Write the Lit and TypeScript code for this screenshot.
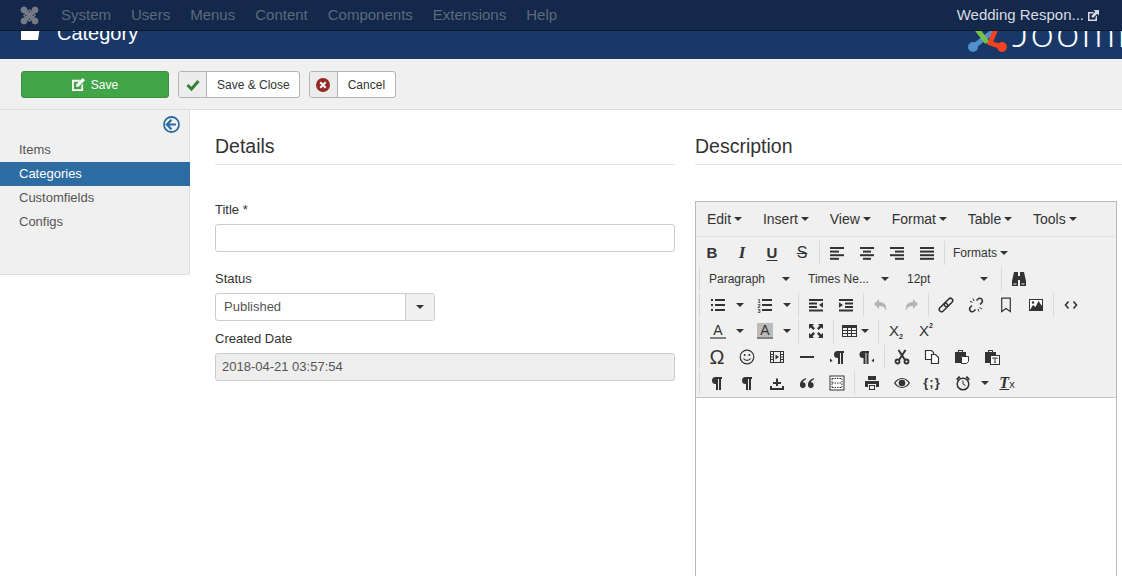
import { LitElement, css, html, svg } from "lit";
import { customElement } from "lit/decorators.js";

const ink = "#333";

// toolbar glyphs, all on a 16x16 box
const lines = (rows: [number, number][]) =>
	rows.map(([x, w], i) => svg`<rect x=${x} y=${2 + i * 3.6} width=${w} height="2" fill=${ink}></rect>`);

const icons: Record<string, unknown> = {
	alignleft: lines([[1, 14], [1, 9], [1, 14], [1, 9]]),
	aligncenter: lines([[1, 14], [4, 8], [1, 14], [4, 8]]),
	alignright: lines([[1, 14], [6, 9], [1, 14], [6, 9]]),
	justify: lines([[1, 14], [1, 14], [1, 14], [1, 14]]),
	binoculars: svg`<path fill=${ink} d="M3 1h4v4h2V1h4l2 9v5H9V9H7v6H1v-5z"></path><path fill="#f0f0f0" d="M2.5 12.500h3v1h-3zM10.500 12.500h3v1h-3z"></path>`,
	bullist: svg`<path fill=${ink} d="M1 2h2v2H1zM1 7h2v2H1zM1 12h2v2H1zM5 2h10v2H5zM5 7h10v2H5zM5 12h10v2H5z"></path>`,
	numlist: svg`<path fill=${ink} d="M5 2h10v2H5zM5 7h10v2H5zM5 12h10v2H5z"></path><text x="0.500" y="5.500" class="tiny">1</text><text x="0.500" y="10.500" class="tiny">2</text><text x="0.500" y="15.500" class="tiny">3</text>`,
	outdent: svg`<path fill=${ink} d="M1 2h14v2H1zM1 5.500h8v2H1zM1 9h8v2H1zM1 12.500h14v2H1zM15 5.200v5.600L11 8z"></path>`,
	indent: svg`<path fill=${ink} d="M1 2h14v2H1zM7 5.500h8v2H7zM7 9h8v2H7zM1 12.500h14v2H1zM1 5.200v5.600L5 8z"></path>`,
	undo: svg`<path fill="#b4b4b4" d="M6 2 1 7l5 5V9c4 0 6 1 7 5 1-5-1-9-7-9z"></path>`,
	redo: svg`<path fill="#b4b4b4" d="M10 2l5 5-5 5V9c-4 0-6 1-7 5-1-5 1-9 7-9z"></path>`,
	link: svg`<g fill="none" stroke=${ink} stroke-width="1.600"><rect x="8.200" y="0.500" width="4.600" height="10" rx="2.300" transform="rotate(45 10.500 5.500)"></rect><rect x="3.200" y="5.500" width="4.600" height="10" rx="2.300" transform="rotate(45 5.500 10.500)"></rect></g>`,
	unlink: svg`<g fill="none" stroke=${ink} stroke-width="1.600"><path d="M8.500 3.500 10 2c1.500-1.200 3-.7 3.700.3.800 1 1 2.300 0 3.500L12 7.500M7.500 12.500 6 14c-1.500 1.200-3 .7-3.700-.3-.8-1-1-2.300 0-3.500L4 8.500"></path><path stroke-width="1" d="M2 4 4.500 5.500M5 1.500 6 4M11.500 10.500 14 12M10 12l1 2.500"></path></g>`,
	bookmark: svg`<path fill="none" stroke=${ink} stroke-width="1.200" d="M3.700 1.200h8.600v13.400L8 11.500l-4.300 3.100z"></path>`,
	image: svg`<rect x="1" y="2" width="14" height="12" fill=${ink}></rect><rect x="2" y="3" width="12" height="10" fill="#fff"></rect><path fill=${ink} d="M2 13l3-5 2.500 2 3-6L14 9v4z"></path><circle cx="5" cy="5.500" r="1.200" fill=${ink}></circle>`,
	code: svg`<path fill="none" stroke=${ink} stroke-width="1.600" d="M5.500 4.500 2.500 8l3 3.500M10.500 4.500l3 3.500-3 3.500"></path>`,
	fullscreen: svg`<path fill=${ink} d="M1 1h5L4.500 2.800 7 5.300 5.300 7 2.800 4.500 1 6zM15 1v5l-1.800-1.500L10.700 7 9 5.300l2.500-2.500L10 1zM1 15v-5l1.800 1.500L5.300 9 7 10.700l-2.500 2.500L6 15zM15 15h-5l1.500-1.800L9 10.700 10.700 9l2.500 2.500L15 10z"></path>`,
	table: svg`<path fill=${ink} d="M0 2h15v12H0zM1 5v2h4V5zm5 0v2h3V5zm4 0v2h4V5zM1 8v2h4V8zm5 0v2h3V8zm4 0v2h4V8zM1 11v2h4v-2zm5 0v2h3v-2zm4 0v2h4v-2z" fill-rule="evenodd"></path>`,
	smile: svg`<circle cx="8" cy="8" r="6.800" fill="none" stroke=${ink} stroke-width="1.200"></circle><circle cx="5.700" cy="6" r="1" fill=${ink}></circle><circle cx="10.300" cy="6" r="1" fill=${ink}></circle><path fill="none" stroke=${ink} stroke-width="1.200" d="M4.500 9.500c1.500 2.500 5.500 2.500 7 0"></path>`,
	media: svg`<path fill-rule="evenodd" fill=${ink} d="M1 2h14v12H1zM2 3v2h2V3zm0 3v1.500h2V6zm0 2.500V10h2V8.500zM2 11v2h2v-2zM12 3v2h2V3zm0 3v1.500h2V6zm0 2.500V10h2V8.500zM12 11v2h2v-2zM5 3v10h6V3z"></path><path fill=${ink} d="M6.500 5.500 10 8l-3.500 2.500z"></path>`,
	hr: svg`<rect x="1" y="7" width="14" height="2" fill=${ink}></rect>`,
	ltr: svg`<path fill=${ink} d="M15 2H8.500a3.500 3.500 0 0 0 0 7H9v6h2V4h1v11h2V4h1zM1 9.500v4L3.500 11.500z"></path>`,
	rtl: svg`<path fill=${ink} d="M10 2H4a3.500 3.500 0 0 0 0 7h.5v6h2V4h1v11h2V4h.5zM15 9.500v4l-2.500-2z"></path>`,
	pilcrow: svg`<path fill=${ink} d="M13 2H6.500a3.500 3.500 0 0 0 0 7H7v6h2V4h1v11h2V4h1z"></path>`,
	cut: svg`<g fill="none" stroke=${ink} stroke-width="1.800"><circle cx="3.500" cy="12.500" r="2"></circle><circle cx="12.500" cy="12.500" r="2"></circle><path stroke-width="2" d="M4.500 1 11 11M11.500 1 5 11"></path></g>`,
	copy: svg`<g fill="#fff" stroke=${ink} stroke-width="1.200"><path d="M1.500 1.500h6l2 2v7h-8z"></path><path d="M7.500 5.500h4l3 3v6h-7z"></path></g>`,
	paste: svg`<path fill=${ink} d="M1 3h3V1h5v2h3v4H7v7H1z"></path><path fill="#f0f0f0" d="M5 2h3v1H5z"></path><path fill="#fff" stroke=${ink} d="M7.500 7.500h7v5l-2 2h-5z"></path>`,
	pastetext: svg`<path fill=${ink} d="M1 3h3V1h5v2h3v4H7v7H1z"></path><path fill="#f0f0f0" d="M5 2h3v1H5z"></path><rect x="6.500" y="6.500" width="9" height="9" fill="#fff" stroke=${ink}></rect><path fill=${ink} d="M8.500 8.500h5v1.600h-.8v-.7h-1.200v4h.7v.7h-2.400v-.7h.7v-4H9.300v.7h-.8z"></path>`,
	nonbreaking: svg`<path fill=${ink} d="M1 11h2v2h10v-2h2v4H1zM7 3.500h2V7h3v2H9v2H7V9H4V7h3z"></path>`,
	quote: svg`<path fill=${ink} d="M7 3C4 4 1 6 1 10a2.800 2.800 0 1 0 3-2.700C4.300 6 5.500 5 7 4.300zM15 3c-3 1-6 3-6 7a2.800 2.800 0 1 0 3-2.700c.3-1.300 1.500-2.300 3-3z"></path>`,
	template: svg`<rect x="1" y="1" width="14" height="14" fill="#fff" stroke=${ink}></rect><g fill="none" stroke=${ink} stroke-dasharray="1.500 1"><path d="M3 3.500h10M3 8h10M3 12.500h10M3 3.500v9M13 3.500v9"></path></g>`,
	print: svg`<path fill=${ink} d="M4 1h8v4H4zM1 6h14v6h-3V9H4v3H1zM5 10h6v5H5z"></path><path fill="#f0f0f0" d="M6 11h4v3H6z"></path>`,
	eye: svg`<path fill-rule="evenodd" fill=${ink} d="M8 3c3.500 0 6.500 2.300 8 5-1.500 2.700-4.500 5-8 5s-6.500-2.300-8-5c1.500-2.700 4.500-5 8-5zM1.500 8c1.300 2 3.500 4 6.500 4s5.200-2 6.500-4c-1.300-2-3.500-4-6.500-4S2.800 6 1.500 8z"></path><circle cx="8" cy="8" r="3.300" fill=${ink}></circle>`,
	clock: svg`<circle cx="8" cy="9" r="5.800" fill="#f0f0f0" stroke=${ink} stroke-width="1.500"></circle><path fill="none" stroke=${ink} d="M8 5.500V9l2.500 1.500"></path><path fill=${ink} d="M1 4l3-3 1.500 1.200-3.300 3zM15 4l-3-3-1.500 1.200 3.300 3z"></path>`,
};

type Tool =
	| { kind: "icon"; name: string }
	| { kind: "text"; cls: string; label: string }
	| { kind: "split"; name?: string; cls?: string; label?: string; narrow?: boolean }
	| { kind: "table" }
	| { kind: "listbox"; label: string }
	| { kind: "formats" };

const ic = (name: string): Tool => ({ kind: "icon", name });
const tx = (cls: string, label: string): Tool => ({ kind: "text", cls, label });

const rows: Tool[][][] = [
	[
		[tx("b", "B"), tx("i", "I"), tx("u", "U"), tx("s", "S")],
		[ic("alignleft"), ic("aligncenter"), ic("alignright"), ic("justify")],
		[{ kind: "formats" }],
	],
	[
		[
			{ kind: "listbox", label: "Paragraph" },
			{ kind: "listbox", label: "Times Ne..." },
			{ kind: "listbox", label: "12pt" },
		],
		[ic("binoculars")],
	],
	[
		[{ kind: "split", name: "bullist" }, { kind: "split", name: "numlist" }],
		[ic("outdent"), ic("indent")],
		[ic("undo"), ic("redo")],
		[ic("link"), ic("unlink"), ic("bookmark"), ic("image")],
		[ic("code")],
	],
	[
		[
			{ kind: "split", cls: "fore", label: "A" },
			{ kind: "split", cls: "back", label: "A" },
		],
		[ic("fullscreen")],
		[{ kind: "table" }],
		[tx("sub", "X"), tx("sup", "X")],
	],
	[
		[tx("omega", "Ω"), ic("smile"), ic("media"), ic("hr"), ic("ltr"), ic("rtl")],
		[ic("cut"), ic("copy"), ic("paste"), ic("pastetext")],
	],
	[
		[ic("pilcrow"), ic("pilcrow"), ic("nonbreaking"), ic("quote"), ic("template")],
		[
			ic("print"),
			ic("eye"),
			tx("braces", "{;}"),
			{ kind: "split", name: "clock", narrow: true },
			tx("clear", "T"),
		],
	],
];

const glyph = (name: string) => html`<svg class="glyph" viewBox="0 0 16 16">${icons[name]}</svg>`;

@customElement("app-root")
export class AppRoot extends LitElement {
	static override styles = css`
		:host {
			display: block;
			position: relative;
			width: 1122px;
			height: 576px;
			overflow: hidden;
			background: #fff;
			color: #333;
			font: 13px/18px "Liberation Sans", Arial, sans-serif;
		}

		.navbar {
			position: absolute;
			top: 0;
			left: 0;
			right: 0;
			height: 30px;
			display: flex;
			align-items: center;
			padding-left: 20px;
			background: #13284a;
			border-bottom: 1px solid #0c1a30;
			color: #5e6a7b;
			font-size: 15px;
		}
		.navbar .mark {
			width: 19px;
			height: 19px;
			margin-right: 22px;
		}
		.navbar .menu {
			display: flex;
			gap: 20px;
		}
		.navbar .site {
			margin-left: auto;
			margin-right: 23px;
			display: flex;
			align-items: center;
			gap: 4px;
			color: #d8dce2;
			font-size: 15px;
		}

		.header {
			height: 59px;
			box-sizing: border-box;
			padding: 20px 0 0 21px;
			display: flex;
			background: #1a3867;
			color: #fff;
			overflow: hidden;
		}
		.header .folder {
			width: 20px;
			height: 20px;
			margin-right: 16px;
		}
		.header h1 {
			margin: 0;
			font-size: 20px;
			font-weight: 400;
			line-height: 26px;
		}
		.logo {
			margin-left: auto;
			margin-top: -6px;
			display: flex;
			flex: none;
			width: 156px;
			height: 42px;
		}
		.logo svg {
			width: 42px;
			height: 42px;
			flex: none;
		}
		.logo span {
			margin: -4px 0 0 4px;
			font: 300 42px/42px Lato, "Liberation Sans", sans-serif;
			letter-spacing: 2px;
			white-space: nowrap;
		}

		.actions {
			height: 51px;
			box-sizing: border-box;
			padding: 12px 0 0 21px;
			display: flex;
			gap: 9px;
			background: #f0f0f0;
			border-bottom: 1px solid #ddd;
			font-size: 12px;
		}
		.save {
			width: 148px;
			height: 27px;
			box-sizing: border-box;
			display: flex;
			align-items: center;
			justify-content: center;
			gap: 6px;
			background: #41a548;
			border: 1px solid #3a8f40;
			border-radius: 3px;
			color: #fff;
		}
		.save svg {
			width: 13px;
			height: 13px;
		}
		.act {
			height: 27px;
			box-sizing: border-box;
			display: flex;
			align-items: center;
			background: #fff;
			border: 1px solid #b3b3b3;
			border-radius: 3px;
			color: #333;
			padding-right: 10px;
		}
		.act .tag {
			width: 27px;
			height: 25px;
			margin-right: 10px;
			display: flex;
			align-items: center;
			justify-content: center;
			background: #ececec;
			border-right: 1px solid #b3b3b3;
			border-radius: 3px 0 0 3px;
		}
		.act.keep {
			padding-right: 9px;
		}
		.act svg {
			width: 14px;
			height: 14px;
		}

		.page {
			display: flex;
			align-items: flex-start;
		}
		.side {
			width: 190px;
			height: 165px;
			flex: none;
			box-sizing: border-box;
			display: flex;
			flex-direction: column;
			background: #f0f0f0;
			border-right: 1px solid #ddd;
			border-bottom: 1px solid #ddd;
			border-bottom-right-radius: 3px;
		}
		.side .back {
			align-self: flex-end;
			width: 17px;
			height: 17px;
			margin: 6px 9px 5px 0;
		}
		.side a {
			height: 24px;
			padding-left: 19px;
			line-height: 24px;
			color: #555;
		}
		.side a.active {
			margin-right: -1px;
			background: #2d6ca2;
			color: #fff;
		}

		.details {
			width: 460px;
			flex: none;
			margin: 0 20px 0 25px;
		}
		.desc {
			flex: 1;
			min-width: 0;
		}
		h2 {
			height: 55px;
			box-sizing: border-box;
			margin: 0 0 36px;
			padding-top: 23px;
			border-bottom: 1px solid #e5e5e5;
			font-size: 19.500px;
			font-weight: 400;
			line-height: 26px;
			color: #333;
		}
		.desc h2 {
			margin-bottom: 0;
		}
		label {
			display: block;
			margin-bottom: 5px;
		}
		.field {
			height: 28px;
			box-sizing: border-box;
			margin-bottom: 18px;
			background: #fff;
			border: 1px solid #ccc;
			border-radius: 3px;
		}
		.pick {
			width: 220px;
			margin-bottom: 9px;
			display: flex;
			line-height: 26px;
			padding-left: 8px;
			color: #555;
		}
		.pick b {
			margin-left: auto;
			width: 28px;
			display: flex;
			align-items: center;
			justify-content: center;
			background: #f0f0f0;
			border-left: 1px solid #ccc;
			border-radius: 0 3px 3px 0;
		}
		.locked {
			padding-left: 6px;
			line-height: 26px;
			background: #eee;
			color: #555;
		}

		.editor {
			width: 422px;
			height: 500px;
			margin-top: 36px;
			box-sizing: border-box;
			border: 1px solid #b9b9b9;
			background: #fff;
		}
		.menubar {
			height: 35px;
			box-sizing: border-box;
			display: flex;
			align-items: center;
			gap: 20.800px;
			padding-left: 11px;
			background: #f0f0f0;
			border-bottom: 1px solid #e2e2e2;
			font-size: 14px;
		}
		.menubar span {
			display: flex;
			align-items: center;
			gap: 3px;
		}
		.caret {
			width: 0;
			height: 0;
			flex: none;
			border: 4px solid transparent;
			border-top-color: #333;
			border-bottom: 0;
		}
		.toolbar {
			height: 161px;
			box-sizing: border-box;
			padding: 3px 0 0 3px;
			background: #f0f0f0;
			border-bottom: 1px solid #c5c5c5;
		}
		.row {
			height: 26px;
			display: flex;
			align-items: center;
		}
		.group {
			height: 24px;
			display: flex;
			align-items: center;
			padding-left: 2px;
			margin-right: 2px;
			border-left: 1px solid #d9d9d9;
		}
		.row.first .group:first-child {
			margin-left: -2px;
			padding-left: 0;
			border-left: 0;
		}
		.btn {
			width: 30px;
			height: 24px;
			display: flex;
			align-items: center;
			justify-content: center;
			flex: none;
		}
		.glyph {
			width: 16px;
			height: 16px;
			flex: none;
		}
		.tiny {
			font: 700 5.500px "Liberation Sans", sans-serif;
			fill: #333;
		}
		.split {
			width: 47px;
			height: 24px;
			display: flex;
			align-items: center;
			flex: none;
			padding-left: 8px;
			box-sizing: border-box;
		}
		.split.narrow {
			width: 45px;
		}
		.split .caret {
			margin-left: 10px;
		}
		.tablebtn {
			width: 40px;
			height: 24px;
			display: flex;
			align-items: center;
			gap: 3px;
			padding-left: 6px;
			box-sizing: border-box;
		}
		.listbox {
			width: 99px;
			height: 24px;
			box-sizing: border-box;
			display: flex;
			align-items: center;
			padding-left: 7px;
			font-size: 12px;
			flex: none;
		}
		.listbox .caret {
			margin-left: auto;
			margin-right: 11px;
		}
		.formats {
			display: flex;
			align-items: center;
			gap: 3px;
			padding-left: 6px;
			font-size: 12px;
		}
		.b,
		.i,
		.u,
		.s {
			font-size: 15px;
			line-height: 16px;
		}
		.b {
			font-weight: 700;
		}
		.i {
			font-family: "Liberation Serif", serif;
			font-size: 17px;
			font-style: italic;
			font-weight: 700;
		}
		.u {
			font-weight: 700;
			text-decoration: underline;
			text-underline-offset: 2px;
		}
		.s {
			font-size: 16px;
			text-decoration: line-through;
		}
		.omega {
			font-size: 20px;
			font-family: "Liberation Sans", sans-serif;
		}
		.sub,
		.sup {
			font-size: 15px;
		}
		.sub::after,
		.sup::after {
			content: "2";
			font-size: 7px;
			font-weight: 700;
			line-height: 7px;
		}
		.sub::after {
			vertical-align: -3px;
		}
		.sup::after {
			vertical-align: 8px;
		}
		.braces {
			font-size: 13px;
			font-weight: 700;
			letter-spacing: 1px;
		}
		.clear {
			font-size: 16px;
			font-family: "Liberation Serif", serif;
			font-weight: 700;
			font-style: italic;
			text-decoration: underline;
			line-height: 16px;
		}
		.clear::after {
			content: "x";
			font-family: "Liberation Sans", sans-serif;
			font-size: 11px;
			font-weight: 400;
			font-style: normal;
			display: inline-block;
		}
		.letter {
			width: 16px;
			height: 16px;
			display: flex;
			justify-content: center;
			box-sizing: border-box;
			border-bottom: 2px solid #808080;
			font-size: 14px;
			line-height: 15px;
			flex: none;
		}
		.letter.back {
			background: #bbb;
		}
	`;

	private tool(t: Tool) {
		switch (t.kind) {
			case "icon":
				return html`<div class="btn">${glyph(t.name)}</div>`;
			case "text":
				return html`<div class="btn"><span class=${t.cls}>${t.label}</span></div>`;
			case "split":
				return html`<div class="split ${t.narrow ? "narrow" : ""}">
					${t.name ? glyph(t.name) : html`<span class="letter ${t.cls}">${t.label}</span>`}
					<i class="caret"></i>
				</div>`;
			case "table":
				return html`<div class="tablebtn">${glyph("table")}<i class="caret"></i></div>`;
			case "listbox":
				return html`<div class="listbox">${t.label}<i class="caret"></i></div>`;
			case "formats":
				return html`<div class="formats">Formats<i class="caret"></i></div>`;
		}
	}

	override render() {
		return html`
			<div class="header">
				<svg class="folder" viewBox="0 0 20 20">
					<path fill="#fff" d="M0 0h20l-3 20H0z"></path>
				</svg>
				<h1>Category</h1>
				<div class="logo">
					<svg viewBox="0 0 42 42">
						<g fill="none" stroke-width="5" stroke-linecap="round" stroke-linejoin="round">
							<path stroke="#5091cd" d="M7 33 25 19"></path>
							<path stroke="#f44321" d="M36 33 24 29 29 17"></path>
							<path stroke="#7ac143" d="M7 10 20 27"></path>
						</g>
						<circle cx="7" cy="33" r="5" fill="#5091cd"></circle>
						<circle cx="36" cy="33" r="5" fill="#f44321"></circle>
					</svg>
					<span>Joomla!</span>
				</div>
			</div>

			<div class="navbar">
				<svg class="mark" viewBox="0 0 19 19">
					<g fill="#737a85" stroke="#737a85">
						<path fill="none" stroke-width="4" d="M4 4 15 15M15 4 4 15"></path>
						<circle cx="4" cy="4" r="3"></circle>
						<circle cx="15" cy="4" r="3"></circle>
						<circle cx="4" cy="15" r="3"></circle>
						<circle cx="15" cy="15" r="3"></circle>
						<path fill="none" stroke-width="1.500" d="M4 9.500 9.500 4 15 9.500 9.500 15z"></path>
					</g>
				</svg>
				<div class="menu">
					<span>System</span><span>Users</span><span>Menus</span><span>Content</span>
					<span>Components</span><span>Extensions</span><span>Help</span>
				</div>
				<div class="site">
					Wedding Respon...
					<svg width="11" height="11" viewBox="0 0 11 11">
						<path fill="#d8dce2" d="M0 2h6L5 3.500H1.500v6h6V7L9 5.500V11H0zM5.500 0H11v5.500L9.200 3.800 5 8 3.200 6.200 7.300 1.800z"></path>
					</svg>
				</div>
			</div>

			<div class="actions">
				<div class="save">
					<svg viewBox="0 0 14 14">
						<path fill="#fff" d="M0 2h9L7 4H2v8h8V8l2-2v8H0zM11.500 0 14 2.500 7 9.500H4.500V7z"></path>
					</svg>
					Save
				</div>
				<div class="act keep">
					<span class="tag">
						<svg viewBox="0 0 14 14">
							<path fill="none" stroke="#378137" stroke-width="3" d="M1.500 7 5.500 11 12.500 3"></path>
						</svg>
					</span>
					Save &amp; Close
				</div>
				<div class="act">
					<span class="tag">
						<svg viewBox="0 0 14 14">
							<circle cx="7" cy="7" r="7" fill="#942a25"></circle>
							<path stroke="#fff" stroke-width="2.200" d="M4.300 4.300 9.700 9.700M9.700 4.300 4.300 9.700"></path>
						</svg>
					</span>
					Cancel
				</div>
			</div>

			<div class="page">
				<nav class="side">
					<svg class="back" viewBox="0 0 17 17">
						<circle cx="8.500" cy="8.500" r="7.500" fill="none" stroke="#2d6ca2" stroke-width="1.800"></circle>
						<path fill="none" stroke="#2d6ca2" stroke-width="2.200" d="M8.500 3.800 3.900 8.500l4.600 4.700M4 8.500h9"></path>
					</svg>
					<a>Items</a>
					<a class="active">Categories</a>
					<a>Customfields</a>
					<a>Configs</a>
				</nav>

				<section class="details">
					<h2>Details</h2>
					<label>Title *</label>
					<div class="field"></div>
					<label>Status</label>
					<div class="field pick">
						Published
						<b><i class="caret"></i></b>
					</div>
					<label>Created Date</label>
					<div class="field locked">2018-04-21 03:57:54</div>
				</section>

				<section class="desc">
					<h2>Description</h2>
					<div class="editor">
						<div class="menubar">
							${["Edit", "Insert", "View", "Format", "Table", "Tools"].map(
								(m) => html`<span>${m}<i class="caret"></i></span>`,
							)}
						</div>
						<div class="toolbar">
							${rows.map(
								(row, i) => html`<div class="row ${i === 0 ? "first" : ""}">
									${row.map(
										(g) => html`<div class="group">${g.map((t) => this.tool(t))}</div>`,
									)}
								</div>`,
							)}
						</div>
					</div>
				</section>
			</div>
		`;
	}
}
